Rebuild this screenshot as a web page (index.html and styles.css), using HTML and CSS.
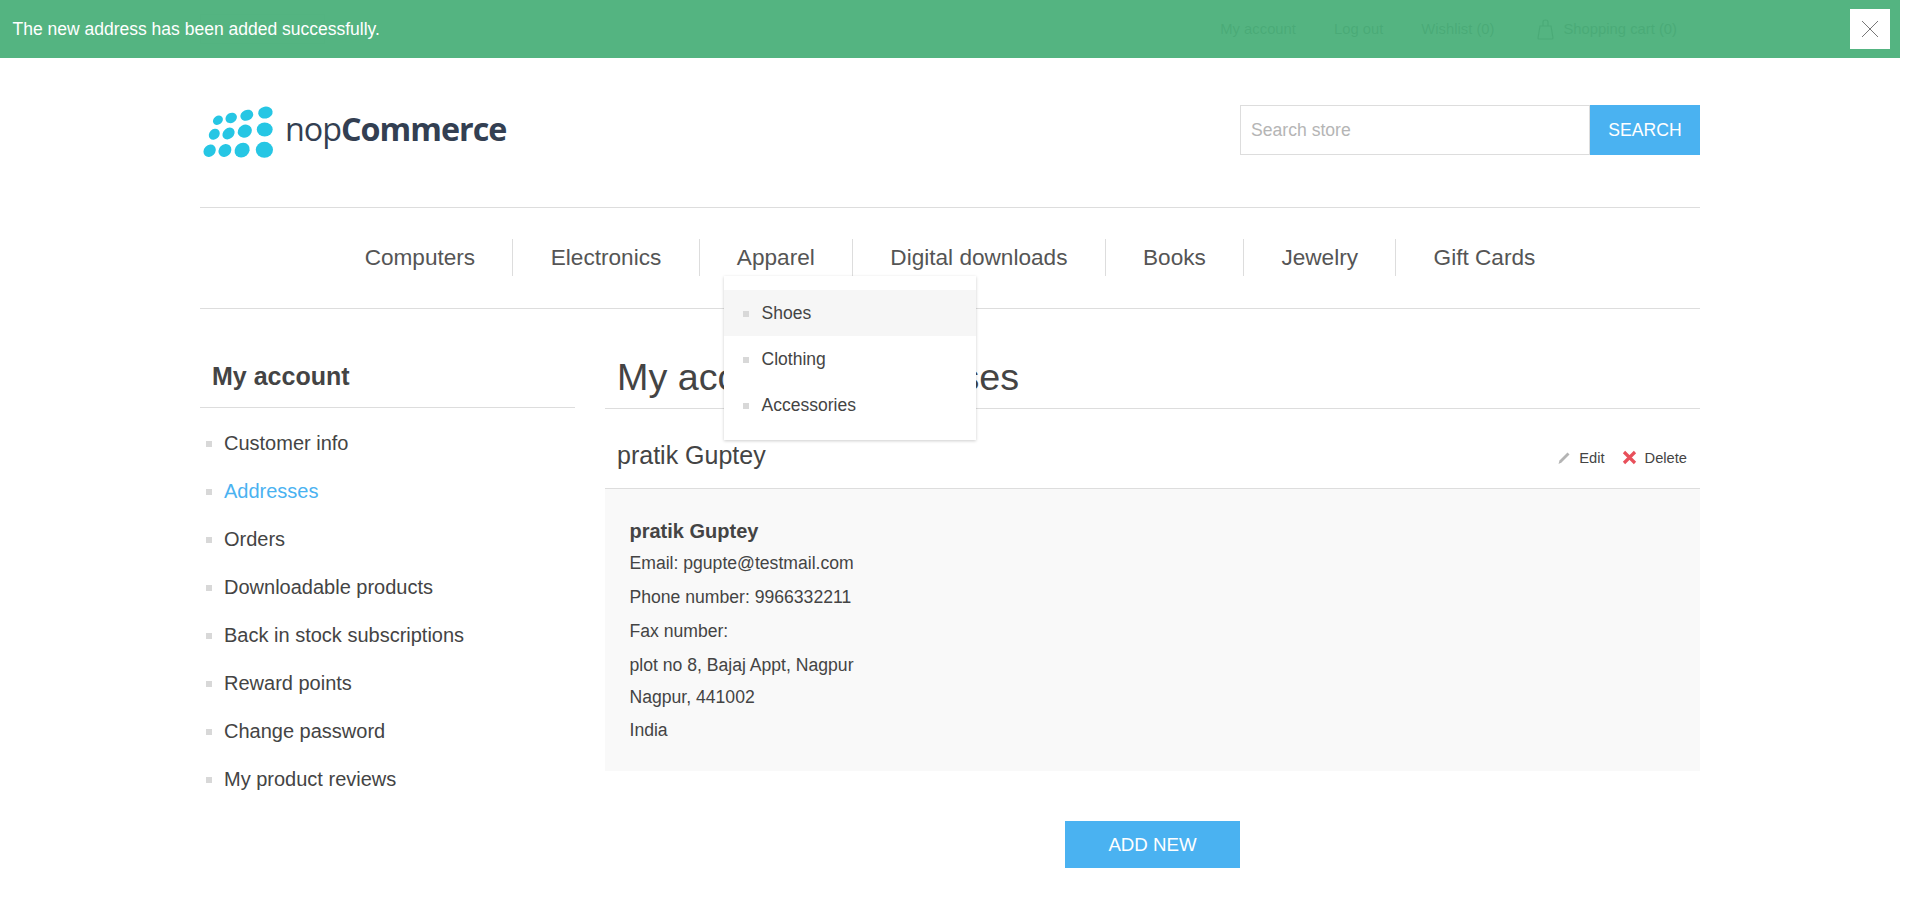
FILE: index.html
```html
<!DOCTYPE html>
<html lang="en">
<head>
  <meta charset="UTF-8">
  <title>nopCommerce - Addresses</title>
  <link rel="stylesheet" href="styles.css">
</head>
<body>
  <div class="page">
    <div class="bar-notification">
      <p class="bar-text">The new address has been added successfully.</p>
      <span class="bar-close">
        <svg width="18" height="18" viewBox="0 0 18 18"><path d="M1 1L17 17M17 1L1 17" stroke="#777" stroke-width="1" fill="none"/></svg>
      </span>
    </div>

    <div class="header-upper">
      <div class="selector-box"></div>
      <div class="header-links">
        <a>My account</a>
        <a>Log out</a>
        <a>Wishlist (0)</a>
        <a class="cart-link">
          <svg width="17" height="21" viewBox="0 0 17 21"><path d="M3 7H14L16 19Q16 20 15 20H2Q1 20 1 19ZM6 7V3Q6 1 8.500 1T11 3V7" stroke="#444" stroke-width="1.200" fill="none"/></svg>
          Shopping cart (0)
        </a>
      </div>
    </div>

    <div class="container">
      <div class="header-lower">
        <a class="logo">
          <svg width="73" height="57" viewBox="20 30 220 170">
            <g fill="#26c6e4">
              <ellipse cx="68" cy="75" rx="16" ry="13" transform="rotate(-35 68 75)"/>
              <ellipse cx="108" cy="68" rx="18" ry="15" transform="rotate(-30 108 68)"/>
              <ellipse cx="155" cy="60" rx="20" ry="16" transform="rotate(-25 155 60)"/>
              <ellipse cx="211" cy="52" rx="22" ry="18" transform="rotate(-10 211 52)"/>
              <ellipse cx="57" cy="117" rx="18" ry="15" transform="rotate(-45 57 117)"/>
              <ellipse cx="100" cy="115" rx="20" ry="16" transform="rotate(-40 100 115)"/>
              <ellipse cx="149" cy="108" rx="22" ry="19" transform="rotate(-30 149 108)"/>
              <ellipse cx="209" cy="103" rx="24" ry="21"/>
              <ellipse cx="43" cy="167" rx="20" ry="17" transform="rotate(-45 43 167)"/>
              <ellipse cx="89" cy="166" rx="21" ry="18" transform="rotate(-45 89 166)"/>
              <ellipse cx="141" cy="165" rx="24" ry="21" transform="rotate(-40 141 165)"/>
              <ellipse cx="208" cy="164" rx="26" ry="24"/>
            </g>
          </svg>
          <span class="logo-text">nop<b>Commerce</b></span>
        </a>
        <form class="search-box">
          <input class="search-input" type="text" placeholder="Search store">
          <button class="search-btn" type="button">SEARCH</button>
        </form>
      </div>

      <div class="header-menu">
        <ul class="top-menu">
          <li><a>Computers</a></li>
          <li><a>Electronics</a></li>
          <li class="has-sub"><a>Apparel</a>
            <ul class="sublist">
              <li class="active"><a>Shoes</a></li>
              <li><a>Clothing</a></li>
              <li><a>Accessories</a></li>
            </ul>
          </li>
          <li><a>Digital downloads</a></li>
          <li><a>Books</a></li>
          <li><a>Jewelry</a></li>
          <li><a>Gift Cards</a></li>
        </ul>
      </div>

      <div class="master-wrapper">
        <div class="side-2">
          <div class="block-title">My account</div>
          <ul class="side-list">
            <li><a>Customer info</a></li>
            <li class="active"><a>Addresses</a></li>
            <li><a>Orders</a></li>
            <li><a>Downloadable products</a></li>
            <li><a>Back in stock subscriptions</a></li>
            <li><a>Reward points</a></li>
            <li><a>Change password</a></li>
            <li><a>My product reviews</a></li>
          </ul>
        </div>

        <div class="center-2">
          <div class="page-title"><h1>My account - Addresses</h1></div>
          <div class="section">
            <div class="section-title">
              <strong>pratik Guptey</strong>
              <div class="buttons">
                <a class="edit-btn">
                  <svg width="14" height="14" viewBox="0 0 14 14"><path d="M1.500 13L2.500 9.500L10.500 1.500L12.500 3.500L4.500 11.500Z" fill="#b4b4b4"/></svg>
                  Edit
                </a>
                <a class="delete-btn">
                  <svg width="15" height="15" viewBox="0 0 15 15"><path d="M2 2L13 13M13 2L2 13" stroke="#e8505b" stroke-width="3.200" fill="none"/></svg>
                  Delete
                </a>
              </div>
            </div>
            <ul class="address-info">
              <li class="name">pratik Guptey</li>
              <li class="line-a">Email: pgupte@testmail.com</li>
              <li class="line-a">Phone number: 9966332211</li>
              <li class="line-a">Fax number:</li>
              <li class="line-b">plot no 8, Bajaj Appt, Nagpur</li>
              <li class="line-b">Nagpur, 441002</li>
              <li class="line-b">India</li>
            </ul>
          </div>
          <div class="add-button"><button type="button">ADD NEW</button></div>
        </div>
      </div>
    </div>
  </div>
</body>
</html>
```

FILE: styles.css
```css
* {
  box-sizing: border-box;
}
html, body {
  margin: 0;
  height: 913px;
  overflow: hidden;
  background: #fff;
}
body {
  font-family: "Liberation Sans", Arial, sans-serif;
  color: #444;
}
ul {
  list-style: none;
  margin: 0;
  padding: 0;
}
.page {
  position: relative;
  width: 1900px;
}

/* notification sits over the upper header */
.bar-notification {
  position: absolute;
  top: 0;
  left: 0;
  width: 100%;
  height: 58px;
  background: rgba(75, 176, 122, 0.95);
  color: #fff;
  display: flex;
  align-items: center;
  justify-content: space-between;
  padding: 0 10px 0 12.500px;
}
.bar-text {
  margin: 0;
  font-size: 17.500px;
}
.bar-close {
  width: 40px;
  height: 40px;
  background: #fff;
  display: flex;
  align-items: center;
  justify-content: center;
}

.header-upper {
  width: 1500px;
  height: 58px;
  margin: 0 auto;
  display: flex;
  align-items: center;
  justify-content: space-between;
}
.selector-box {
  width: 125px;
  height: 30px;
  border: 1px solid #ddd;
}
.header-links {
  display: flex;
  align-items: center;
  font-size: 14.800px;
  color: #444;
}
.header-links a {
  margin-left: 38px;
}
.cart-link {
  display: flex;
  align-items: center;
  gap: 9px;
  height: 58px;
  padding: 0 23px 0 23px;
  background: #f0f0f0;
  margin-left: 20px !important;
}

.container {
  width: 1500px;
  margin: 0 auto;
}
.header-lower {
  height: 149px;
  display: flex;
  justify-content: space-between;
  padding-top: 47px;
}
.logo {
  display: flex;
  align-items: flex-start;
  gap: 10px;
  padding-left: 2px;
  height: 60px;
}
.logo-text {
  font-family: "Open Sans", sans-serif;
  font-size: 32.300px;
  letter-spacing: -1px;
  color: #333f52;
  margin-top: 1px;
}
.logo-text b {
  font-weight: 700;
}
.search-box {
  display: flex;
  height: 50px;
  margin: 0;
}
.search-input {
  width: 350px;
  height: 50px;
  border: 1px solid #ddd;
  padding: 0 10px;
  font: 17.600px "Liberation Sans", Arial, sans-serif;
  color: #777;
}
.search-input::placeholder {
  color: #b5b5b5;
}
.search-btn {
  width: 110px;
  height: 50px;
  border: none;
  background: #4ab2f1;
  color: #fff;
  font: 17.600px "Liberation Sans", Arial, sans-serif;
}

.header-menu {
  border-top: 1px solid #ddd;
  border-bottom: 1px solid #ddd;
  height: 102px;
  display: flex;
  align-items: center;
  justify-content: center;
  padding-bottom: 1px;
}
.top-menu {
  display: flex;
}
.top-menu > li {
  position: relative;
  padding: 0 37.300px;
  font-size: 22.600px;
  line-height: 37px;
  border-left: 1px solid #ddd;
}
.top-menu > li:first-child {
  border-left: none;
}
.top-menu a {
  color: #555;
}
.sublist {
  position: absolute;
  top: 37px;
  left: 24px;
  width: 252px;
  height: 164px;
  padding-top: 14px;
  background: #fff;
  box-shadow: 0 1px 3px rgba(0, 0, 0, 0.2);
  z-index: 5;
  font-size: 17.500px;
}
.sublist li {
  height: 46px;
  line-height: 46px;
  padding-left: 38px;
  position: relative;
}
.sublist li::before,
.side-list li::before {
  content: "";
  position: absolute;
  left: 19px;
  top: 21px;
  width: 6px;
  height: 6px;
  background: #d8d8d8;
}
.sublist li.active {
  background: #f6f6f6;
}
.sublist a {
  color: #444;
}

.master-wrapper {
  display: flex;
  gap: 30px;
  padding-top: 46px;
}
.side-2 {
  width: 375px;
}
.block-title {
  height: 53px;
  border-bottom: 1px solid #ddd;
  padding: 6px 0 0 12px;
  font-size: 25px;
  font-weight: 700;
  line-height: 30px;
  color: #444;
}
.side-list {
  padding-top: 11px;
}
.side-list li {
  position: relative;
  height: 48px;
  line-height: 48px;
  padding-left: 24px;
  font-size: 20px;
}
.side-list li::before {
  left: 6px;
  top: 22px;
}
.side-list li.active a {
  color: #4ab2f1;
}

.center-2 {
  flex: 1;
}
.page-title {
  height: 54px;
  border-bottom: 1px solid #ddd;
  padding-left: 12px;
}
.page-title h1 {
  margin: 0;
  font-size: 37.700px;
  font-weight: 400;
  line-height: 44px;
  color: #444;
}
.section-title {
  height: 80px;
  border-bottom: 1px solid #ddd;
  display: flex;
  align-items: center;
  justify-content: space-between;
  padding: 14px 13px 0 12px;
}
.section-title strong {
  font-size: 25px;
  font-weight: 400;
}
.buttons {
  display: flex;
  gap: 17px;
  font-size: 14.700px;
  padding-top: 4px;
}
.buttons a {
  display: flex;
  align-items: center;
  gap: 8px;
}
.address-info {
  background: #f9f9f9;
  height: 282px;
  padding: 26px 24.500px;
  font-size: 17.600px;
}
.address-info li {
  line-height: 32.500px;
}
.address-info .name {
  font-size: 20px;
  font-weight: 700;
}
.address-info .line-a {
  line-height: 34px;
}
.address-info .name + .line-a {
  margin-top: -1.500px;
}
.address-info .line-b:nth-child(5) {
  margin-top: 0.500px;
}
.add-button {
  padding-top: 50px;
  display: flex;
  justify-content: center;
}
.add-button button {
  width: 175px;
  height: 47px;
  border: none;
  background: #4ab2f1;
  color: #fff;
  font: 18.700px "Liberation Sans", Arial, sans-serif;
}
```
